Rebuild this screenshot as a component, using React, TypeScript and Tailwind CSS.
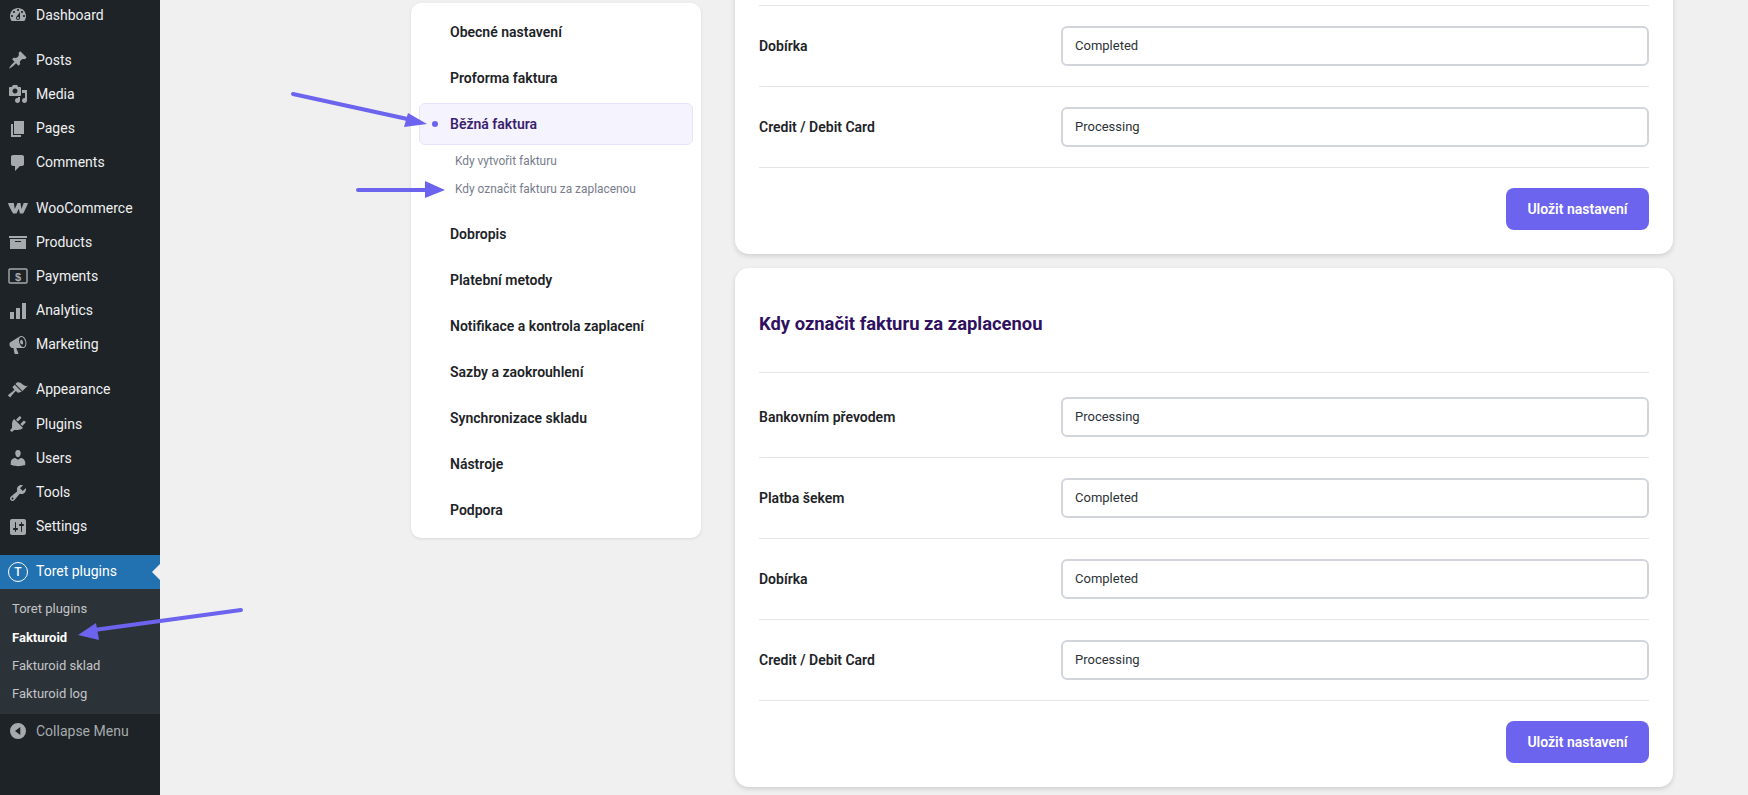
const sans = "font-['Roboto','Noto_Sans',sans-serif]";

const icons: Record<string, string> = {
  dashboard: "M3.76 16h12.48c1.1-1.37 1.76-3.11 1.76-5 0-4.42-3.58-8-8-8s-8 3.58-8 8c0 1.89.66 3.63 1.76 5zM10 4c.55 0 1 .45 1 1s-.45 1-1 1-1-.45-1-1 .45-1 1-1zM6 6c.55 0 1 .45 1 1s-.45 1-1 1-1-.45-1-1 .45-1 1-1zm8 0c.55 0 1 .45 1 1s-.45 1-1 1-1-.45-1-1 .45-1 1-1zm-5.37 5.55L12 7v6c0 1.1-.9 2-2 2s-2-.9-2-2c0-.57.24-1.08.63-1.45zM4 10c.55 0 1 .45 1 1s-.45 1-1 1-1-.45-1-1 .45-1 1-1zm12 0c.55 0 1 .45 1 1s-.45 1-1 1-1-.45-1-1 .45-1 1-1zm-5 3c0-.55-.45-1-1-1s-1 .45-1 1 .45 1 1 1 1-.45 1-1z",
  posts: "M10.44 3.02l1.82-1.82 6.36 6.35-1.83 1.82c-1.05-.68-2.48-.57-3.41.36l-.75.75c-.92.93-1.04 2.35-.35 3.41l-1.83 1.82-2.41-2.41-2.8 2.79c-.42.42-3.38 2.71-3.8 2.29s1.86-3.39 2.28-3.81l2.79-2.79L4.1 9.36l1.83-1.82c1.05.69 2.48.57 3.4-.36l.75-.75c.93-.92 1.05-2.35.36-3.41z",
  media: "M13 11V4c0-.55-.45-1-1-1h-1.67L9 1H5L3.67 3H2c-.55 0-1 .45-1 1v7c0 .55.45 1 1 1h10c.55 0 1-.45 1-1zM7 4.5c1.38 0 2.5 1.12 2.5 2.5S8.38 9.5 7 9.5 4.5 8.38 4.5 7 5.62 4.5 7 4.5zM14 6h5v10.5c0 1.38-1.12 2.5-2.5 2.5S14 17.88 14 16.5s1.12-2.5 2.5-2.5c.17 0 .34.02.5.05V9h-3V6zm-4 8.05V13h2v3.5c0 1.38-1.12 2.5-2.5 2.5S7 17.88 7 16.5 8.12 14 9.5 14c.17 0 .34.02.5.05z",
  pages: "M6 15V2h10v13H6zm-1 1h8v2H3V5h2v11z",
  comments: "M5 2h9c1.1 0 2 .9 2 2v7c0 1.1-.9 2-2 2h-2l-5 5v-5H5c-1.1 0-2-.9-2-2V4c0-1.1.9-2 2-2z",
  woo: "M0 5h5.800l1 6 2.700-6h3l.900 6 2.300-6H20c-1.300 3.500-3 7.300-4.800 10.500h-3.300l-1.100-4.800-2.300 4.800H5.200C3 12.300 1 8.500 0 5z",
  products: "M19 4v2H1V4h18zM2 7h16v10H2V7zm11 3V9H7v1h6z",
  analytics: "M18 18V2h-4v16h4zm-6 0V7H8v11h4zm-6 0v-7H2v7h4z",
  marketing: "M18.15 5.94c.46 1.62.38 3.22-.02 4.48-.42 1.28-1.26 2.18-2.3 2.48-.16.06-.26.06-.4.06-.06.02-.12.02-.18.02-.06.02-.14.02-.22.02h-6.8l2.22 5.5c.02.14-.06.26-.14.34-.08.1-.24.16-.34.16H6.95c-.1 0-.26-.06-.34-.16-.08-.08-.16-.2-.14-.34l-1-5.5H4.25l-.02-.02c-.5.06-1.08-.18-1.54-.62s-.88-1.08-1.06-1.88c-.24-.8-.2-1.56-.02-2.2.2-.62.58-1.08 1.06-1.3l.02-.02 9-5.4c.1-.06.18-.1.24-.16.06-.04.14-.08.24-.12.16-.08.28-.12.5-.18 1.04-.3 2.24.1 3.22.98s1.84 2.24 2.26 3.86zm-2.58 5.98h-.02c.4-.1.74-.34 1.04-.7.58-.7.86-1.76.86-3.04-.02-.64-.1-1.3-.28-1.98-.34-1.36-1.02-2.5-1.78-3.24s-1.68-1.1-2.46-.88c-.82.22-1.4.96-1.7 2-.32 1.04-.28 2.36.06 3.72.38 1.36 1 2.5 1.8 3.24.78.74 1.62 1.1 2.48.88zm-2.54-7.08c.22-.04.42-.02.62.04.38.16.76.48 1.02 1s.42 1.2.42 1.78c0 .92-.32 1.56-.84 1.76-.38.14-.84.02-1.22-.3-.38-.34-.72-.86-.86-1.44-.16-.62-.12-1.18.04-1.72.14-.52.44-.96.82-1.12z",
  appearance: "M14.48 11.06L7.41 3.99l1.5-1.5c.5-.56 2.3-.47 3.51.32 1.21.8 1.43 1.28 2.91 2.1 1.18.64 2.45 1.26 4.45.85zm-.71.71L6.7 4.7 4.93 6.47c-.39.39-.39 1.02 0 1.41l1.06 1.06c.39.39.39 1.03 0 1.42-.6.6-6.04 5.04-6.04 5.04l2.1 2.1s4.44-5.44 5.04-6.04c.39-.39 1.03-.39 1.42 0l1.06 1.06c.39.39 1.02.39 1.41 0z",
  plugins: "M13.11 4.36L9.87 7.6 8 5.73l3.24-3.24c.35-.34 1.05-.2 1.56.32.52.51.66 1.21.31 1.55zm-8 1.77l.91-1.12 9.01 9.01-1.19.84c-.71.71-2.63 1.16-3.82 1.16H6.14L4.9 17.26c-.59.59-1.54.59-2.12 0-.59-.58-.59-1.53 0-2.12l1.24-1.24v-3.88c0-1.13.4-3.19 1.09-3.89zm7.26 3.97l3.24-3.24c.34-.35 1.04-.21 1.55.31.52.51.66 1.21.31 1.55l-3.24 3.25z",
  users: "M10 9.25c-2.27 0-2.73-3.44-2.73-3.44C7 4.02 7.82 2 9.97 2c2.16 0 2.98 2.02 2.71 3.81 0 0-.41 3.44-2.68 3.44zm0 2.57L12.72 10c2.39 0 4.52 2.33 4.52 4.53v2.49s-3.65 1.13-7.24 1.13c-3.65 0-7.24-1.13-7.24-1.13v-2.49c0-2.25 1.94-4.48 4.47-4.48z",
  tools: "M16.68 9.77c-1.34 1.34-3.3 1.67-4.95.99l-5.41 6.52c-.99.99-2.59.99-3.58 0s-.99-2.59 0-3.57l6.52-5.42c-.68-1.65-.35-3.61.99-4.95 1.28-1.28 3.12-1.62 4.72-1.06l-2.89 2.89 2.82 2.82 2.86-2.87c.53 1.58.18 3.39-1.08 4.65zM3.81 16.21c.4.39 1.04.39 1.43 0 .4-.4.4-1.04 0-1.43-.39-.4-1.03-.4-1.43 0-.39.39-.39 1.03 0 1.43z",
  settings: "M18 16V4c0-1.1-.9-2-2-2H4c-1.1 0-2 .9-2 2v12c0 1.1.9 2 2 2h12c1.1 0 2-.9 2-2zM8 11h1c.55 0 1 .45 1 1s-.45 1-1 1H8v1.5c0 .28-.22.5-.5.5s-.5-.22-.5-.5V13H6c-.55 0-1-.45-1-1s.45-1 1-1h1V5.5c0-.28.22-.5.5-.5s.5.22.5.5V11zm5-2h-1c-.55 0-1-.45-1-1s.45-1 1-1h1V5.5c0-.28.22-.5.5-.5s.5.22.5.5V7h1c.55 0 1 .45 1 1s-.45 1-1 1h-1v5.500c0 .28-.22.5-.5.5s-.5-.22-.5-.5V9z",
};

const MenuIcon = ({ name }: { name: string }) => {
  if (name === "payments") {
    return (
      <svg viewBox="0 0 20 20" className="h-5 w-5 text-[#a7aaad]">
        <rect x="1" y="3" width="18" height="14" rx="1" fill="none" stroke="currentColor" strokeWidth="1.4" />
        <text x="10" y="14.500" textAnchor="middle" fontSize="11" fontWeight="700" fill="currentColor" fontFamily="Liberation Sans">$</text>
      </svg>
    );
  }
  return (
    <svg viewBox="0 0 20 20" className="h-5 w-5 text-[#a7aaad]" fill="currentColor" fillRule="evenodd">
      <path d={icons[name]} />
    </svg>
  );
};

const groups = [
  [["Dashboard", "dashboard"]],
  [["Posts", "posts"], ["Media", "media"], ["Pages", "pages"], ["Comments", "comments"]],
  [["WooCommerce", "woo"], ["Products", "products"], ["Payments", "payments"], ["Analytics", "analytics"], ["Marketing", "marketing"]],
  [["Appearance", "appearance"], ["Plugins", "plugins"], ["Users", "users"], ["Tools", "tools"], ["Settings", "settings"]],
];

const Sidebar = () => (
  <aside className="w-40 shrink-0 bg-[#1d2327] text-[14px] text-[#f0f0f1]">
    <div className="-mt-[2px] flex flex-col gap-[11px]">
      {groups.map((group, i) => (
        <div key={i}>
          {group.map(([label, icon]) => (
            <div key={label} className="flex h-[34.2px] items-center gap-2 pl-2">
              <MenuIcon name={icon} />
              <span>{label}</span>
            </div>
          ))}
        </div>
      ))}
      <div>
        <div className="relative flex h-[34px] items-center gap-2 bg-[#2271b1] pl-2 text-white">
          <span className="flex h-5 w-5 items-center justify-center rounded-full border-[1.5px] border-white text-[12px] font-medium leading-none">T</span>
          <span>Toret plugins</span>
          <span className="absolute right-0 top-[9px] h-0 w-0 border-y-[8px] border-r-[8px] border-y-transparent border-r-[#f0f0f0]" />
        </div>
        <div className="bg-[#2c3338] py-[6px] text-[13px] text-[#c3c4c7]">
          <div className="flex h-[28.3px] items-center pl-3">Toret plugins</div>
          <div className="flex h-[28.3px] items-center pl-3 font-bold text-white">Fakturoid</div>
          <div className="flex h-[28.3px] items-center pl-3">Fakturoid sklad</div>
          <div className="flex h-[28.3px] items-center pl-3">Fakturoid log</div>
        </div>
        <div className="flex h-[34px] items-center gap-2 pl-[10px] text-[#a7aaad]">
          <svg viewBox="0 0 16 16" className="mr-[2px] h-4 w-4" fill="currentColor" fillRule="evenodd">
            <path d="M8 0a8 8 0 1 1 0 16A8 8 0 0 1 8 0zm2.300 4L5 8l5.300 4z" />
          </svg>
          <span>Collapse Menu</span>
        </div>
      </div>
    </div>
  </aside>
);

const navTop = ["Obecné nastavení", "Proforma faktura"];
const navBottom = ["Dobropis", "Platební metody", "Notifikace a kontrola zaplacení", "Sazby a zaokrouhlení", "Synchronizace skladu", "Nástroje", "Podpora"];

const NavItem = ({ label }: { label: string }) => (
  <div className="flex h-[42px] items-center pl-[31px] text-[14px] font-semibold text-[#1d2327]">{label}</div>
);

const SideNav = () => (
  <nav className="mt-[3px] h-[535px] w-[290px] shrink-0 rounded-[10px] bg-white px-2 pt-2 shadow-[0_1px_3px_rgba(0,0,0,0.1)]">
    <div className="flex flex-col gap-1">
      {navTop.map((label) => <NavItem key={label} label={label} />)}
      <div>
        <div className="flex h-[42px] items-center rounded-md border border-[#e9e2fd] bg-[#f5f3fe] pl-[12px] text-[14px] font-semibold text-[#3b1f70]">
          <span className="mr-[12px] h-[6px] w-[6px] rounded-full bg-[#6c63ef]" />
          Běžná faktura
        </div>
        <div className="pb-[5px] pl-9 pt-[3px] text-[11.9px] text-[#787c8c]">
          <div className="flex h-7 items-center">Kdy vytvořit fakturu</div>
          <div className="flex h-7 items-center">Kdy označit fakturu za zaplacenou</div>
        </div>
      </div>
      {navBottom.map((label) => <NavItem key={label} label={label} />)}
    </div>
  </nav>
);

const Row = ({ label, value }: { label: string; value: string }) => (
  <div className="flex h-[81px] items-center border-b border-[#e5e6ec]">
    <span className="w-[302px] shrink-0 text-[14px] font-semibold text-[#1d2327]">{label}</span>
    <div className="flex h-10 flex-1 items-center rounded-md border-2 border-[#d3d5dd] bg-white pl-[12px] text-[13px] text-[#2c3338]">{value}</div>
  </div>
);

const Card = ({ title, rows }: { title: string; rows: string[][] }) => (
  <section className="rounded-[14px] bg-white px-6 pb-6 shadow-[0_2px_5px_rgba(0,0,0,0.14)]">
    <div className="flex h-[105px] items-center border-b border-[#e5e6ec] pt-2">
      <h2 className="text-[18.4px] font-bold text-[#2f1160]">{title}</h2>
    </div>
    <div className="pt-1">
      {rows.map(([label, value]) => <Row key={label} label={label} value={value} />)}
    </div>
    <div className="flex justify-end pt-5">
      <button className="h-[42px] w-[143px] rounded-lg bg-[#6c63ef] text-[14px] font-semibold text-white">Uložit nastavení</button>
    </div>
  </section>
);

const rowsA = [["Bankovním převodem", "Processing"], ["Platba šekem", "Completed"], ["Dobírka", "Completed"], ["Credit / Debit Card", "Processing"]];

// annotation arrows drawn over the screenshot
const Arrows = () => (
  <svg className="pointer-events-none absolute left-0 top-0 h-[795px] w-[1748px]" viewBox="0 0 1748 795">
    <g stroke="#6c63ef" strokeWidth="4" strokeLinecap="round" fill="#6c63ef">
      <line x1="293" y1="94" x2="412" y2="120" />
      <line x1="358" y1="190" x2="428" y2="190" />
      <line x1="241" y1="610" x2="94" y2="630" />
    </g>
    <g fill="#6c63ef">
      <polygon points="427,124 408,113 404,127" />
      <polygon points="445,190 425,181 425,198" />
      <polygon points="78,635 96,623 99,640" />
    </g>
  </svg>
);

export default function App() {
  return (
    <div className={`relative flex h-screen overflow-hidden bg-[#f0f0f0] ${sans}`}>
      <Sidebar />
      <main className="flex flex-1 items-start pl-[251px]">
        <SideNav />
        <div className="-mt-[265px] ml-[34px] flex w-[938px] shrink-0 flex-col gap-[14px]">
          <Card title="Kdy vytvořit fakturu" rows={rowsA} />
          <Card title="Kdy označit fakturu za zaplacenou" rows={rowsA} />
        </div>
      </main>
      <Arrows />
    </div>
  );
}
